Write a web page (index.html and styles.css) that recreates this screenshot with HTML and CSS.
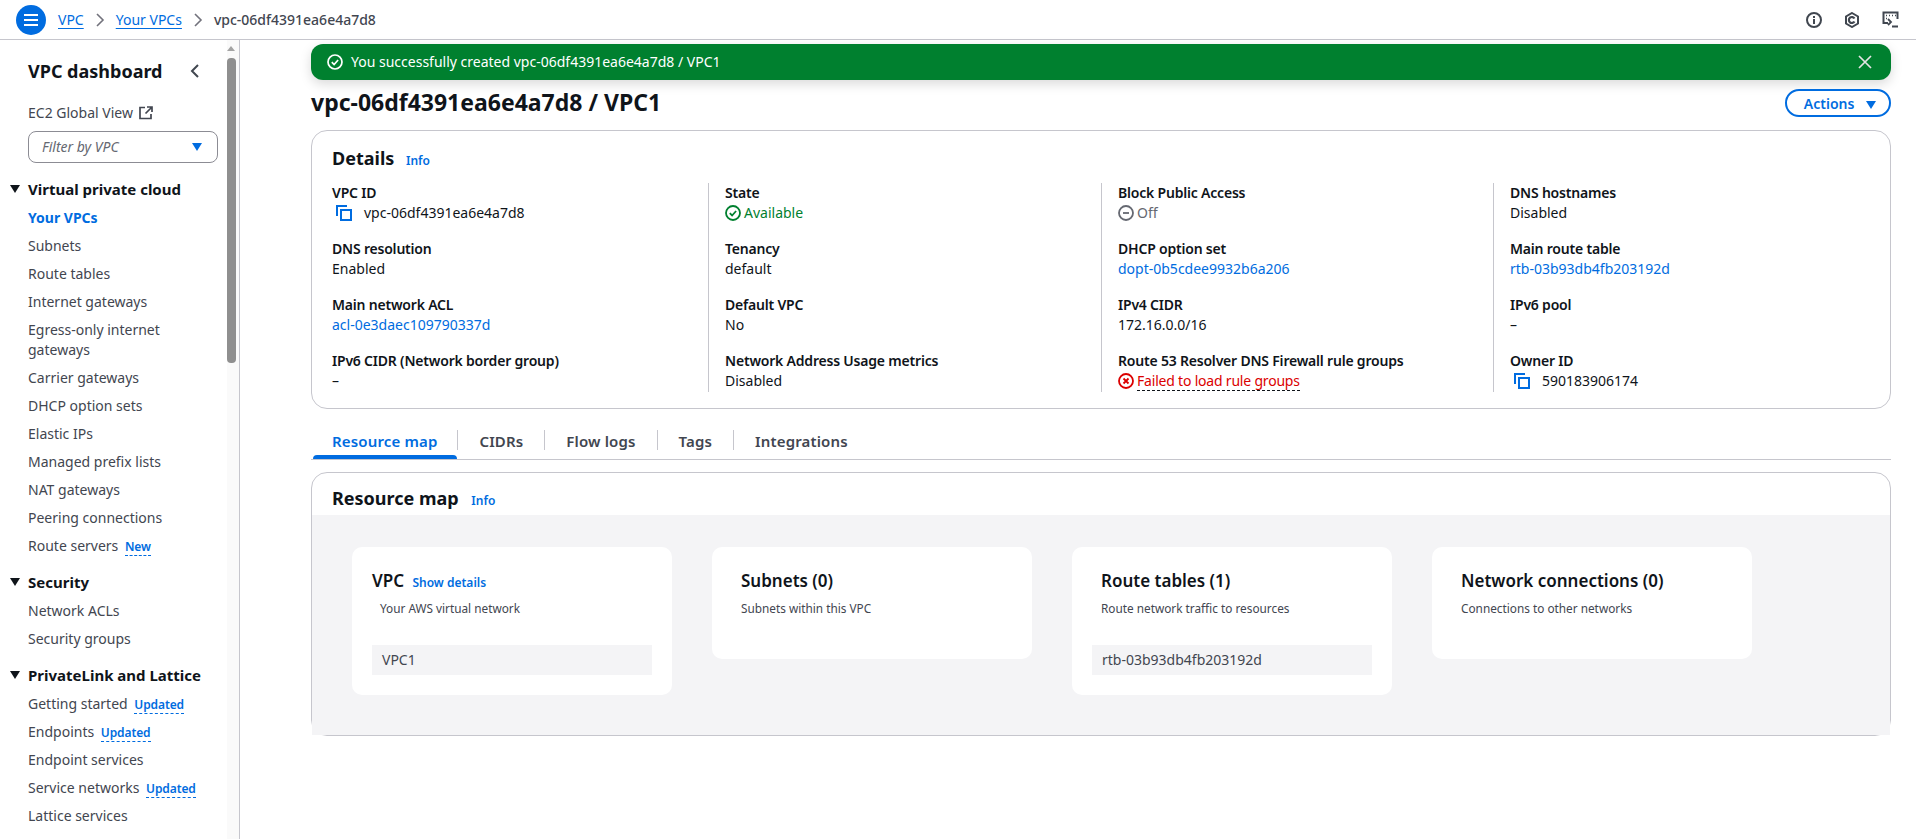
FILE: index.html
```html
<!DOCTYPE html>
<html lang="en">
<head>
    <meta charset="UTF-8">
    <meta name="viewport" content="width=device-width, initial-scale=1.0">
    <title>vpc-06df4391ea6e4a7d8 / VPC1</title>
    <link rel="stylesheet" href="styles.css">
</head>
<body>
    <header class="topbar">
        <button class="menu-btn" aria-label="Menu">
            <svg width="16" height="14" viewBox="0 0 16 14"><path d="M1 2h14M1 7h14M1 12h14" stroke="#fff" stroke-width="2" fill="none"/></svg>
        </button>
        <a class="crumb" href="#">VPC</a>
        <svg class="crumb-sep" width="10" height="14" viewBox="0 0 10 14"><path d="M2 1l6 6-6 6" stroke="#72727c" stroke-width="1.6" fill="none"/></svg>
        <a class="crumb" href="#">Your VPCs</a>
        <svg class="crumb-sep" width="10" height="14" viewBox="0 0 10 14"><path d="M2 1l6 6-6 6" stroke="#72727c" stroke-width="1.6" fill="none"/></svg>
        <span class="crumb-current">vpc-06df4391ea6e4a7d8</span>
        <div class="top-icons">
            <svg width="16" height="16" viewBox="0 0 16 16"><circle cx="8" cy="8" r="7" stroke="#414750" stroke-width="2" fill="none"/><path d="M8 7v5M8 4v2" stroke="#414750" stroke-width="2" fill="none"/></svg>
            <svg width="16" height="16" viewBox="0 0 16 16"><path d="M8 1l6 3.500v7L8 15l-6-3.500v-7z" stroke="#414750" stroke-width="2" fill="none"/><path d="M10.500 6.500A3 3 0 1 0 10.500 9.500" stroke="#414750" stroke-width="2.200" fill="none"/></svg>
            <svg width="17" height="17" viewBox="0 0 17 17"><path d="M6 12H1.500V1.500h14V8" stroke="#414750" stroke-width="2" fill="none"/><path d="M4 4.500h1M7 4.500h1M10 4.500h1M13 4.500h1M4 7.500h1" stroke="#414750" stroke-width="1.500" fill="none"/><path d="M6 8l3 3-3 3M10 15.500h6" stroke="#414750" stroke-width="1.800" fill="none"/></svg>
        </div>
    </header>

    <div class="layout">
        <nav class="sidebar">
            <div class="side-head">
                <h2>VPC dashboard</h2>
                <svg width="10" height="14" viewBox="0 0 10 14"><path d="M8 1L2 7l6 6" stroke="#414750" stroke-width="2" fill="none"/></svg>
            </div>
            <a class="side-link global" href="#">EC2 Global View
                <svg width="14" height="14" viewBox="0 0 14 14"><path d="M6 1.500H1v11h11V8M8 1h5v5M13 1L6.500 7.500" stroke="#424650" stroke-width="1.700" fill="none"/></svg>
            </a>
            <div class="side-filter">
                <span>Filter by VPC</span>
                <i class="tri-down blue"></i>
            </div>

            <div class="side-section first"><i class="tri-down"></i>Virtual private cloud</div>
            <a class="side-link active" href="#">Your VPCs</a>
            <a class="side-link" href="#">Subnets</a>
            <a class="side-link" href="#">Route tables</a>
            <a class="side-link" href="#">Internet gateways</a>
            <a class="side-link" href="#">Egress-only internet gateways</a>
            <a class="side-link" href="#">Carrier gateways</a>
            <a class="side-link" href="#">DHCP option sets</a>
            <a class="side-link" href="#">Elastic IPs</a>
            <a class="side-link" href="#">Managed prefix lists</a>
            <a class="side-link" href="#">NAT gateways</a>
            <a class="side-link" href="#">Peering connections</a>
            <a class="side-link" href="#">Route servers <b class="tag">New</b></a>

            <div class="side-section"><i class="tri-down"></i>Security</div>
            <a class="side-link" href="#">Network ACLs</a>
            <a class="side-link" href="#">Security groups</a>

            <div class="side-section"><i class="tri-down"></i>PrivateLink and Lattice</div>
            <a class="side-link" href="#">Getting started <b class="tag">Updated</b></a>
            <a class="side-link" href="#">Endpoints <b class="tag">Updated</b></a>
            <a class="side-link" href="#">Endpoint services</a>
            <a class="side-link" href="#">Service networks <b class="tag">Updated</b></a>
            <a class="side-link" href="#">Lattice services</a>
        </nav>
        <div class="side-scroll">
            <i class="scroll-up"></i>
            <div class="scroll-thumb"></div>
        </div>

        <main class="content">
            <div class="flash">
                <svg width="16" height="16" viewBox="0 0 16 16"><circle cx="8" cy="8" r="7" stroke="#fff" stroke-width="1.700" fill="none"/><path d="M4.800 8.200l2.300 2.300 4-4.500" stroke="#fff" stroke-width="1.700" fill="none"/></svg>
                <span>You successfully created vpc-06df4391ea6e4a7d8 / VPC1</span>
                <svg class="flash-close" width="14" height="14" viewBox="0 0 14 14"><path d="M1 1l12 12M13 1L1 13" stroke="#e4e4e4" stroke-width="1.700" fill="none"/></svg>
            </div>

            <div class="page-head">
                <h1>vpc-06df4391ea6e4a7d8 / VPC1</h1>
                <button class="actions">Actions <i class="tri-down blue big"></i></button>
            </div>

            <section class="card details">
                <h2>Details <a class="info" href="#">Info</a></h2>
                <div class="detail-grid">
                    <div class="detail-col">
                        <div class="kv"><label>VPC ID</label><p class="copy"><svg width="16" height="16" viewBox="0 0 16 16"><path d="M1 11V1h10" stroke="#006ce0" stroke-width="2" fill="none"/><rect x="5" y="5" width="10" height="10" stroke="#006ce0" stroke-width="2" fill="none"/></svg>vpc-06df4391ea6e4a7d8</p></div>
                        <div class="kv"><label>DNS resolution</label><p>Enabled</p></div>
                        <div class="kv"><label>Main network ACL</label><p><a href="#">acl-0e3daec109790337d</a></p></div>
                        <div class="kv"><label>IPv6 CIDR (Network border group)</label><p>–</p></div>
                    </div>
                    <div class="detail-col">
                        <div class="kv"><label>State</label><p class="status ok"><svg width="16" height="16" viewBox="0 0 16 16"><circle cx="8" cy="8" r="7" stroke="#00802f" stroke-width="1.800" fill="none"/><path d="M4.800 8.200l2.300 2.300 4-4.500" stroke="#00802f" stroke-width="1.800" fill="none"/></svg>Available</p></div>
                        <div class="kv"><label>Tenancy</label><p>default</p></div>
                        <div class="kv"><label>Default VPC</label><p>No</p></div>
                        <div class="kv"><label>Network Address Usage metrics</label><p>Disabled</p></div>
                    </div>
                    <div class="detail-col">
                        <div class="kv"><label>Block Public Access</label><p class="status off"><svg width="16" height="16" viewBox="0 0 16 16"><circle cx="8" cy="8" r="7" stroke="#656871" stroke-width="1.800" fill="none"/><path d="M5 8h6" stroke="#656871" stroke-width="1.800" fill="none"/></svg>Off</p></div>
                        <div class="kv"><label>DHCP option set</label><p><a href="#">dopt-0b5cdee9932b6a206</a></p></div>
                        <div class="kv"><label>IPv4 CIDR</label><p>172.16.0.0/16</p></div>
                        <div class="kv"><label>Route 53 Resolver DNS Firewall rule groups</label><p class="status err"><svg width="16" height="16" viewBox="0 0 16 16"><circle cx="8" cy="8" r="7" stroke="#db0000" stroke-width="1.800" fill="none"/><path d="M5.500 5.500l5 5M10.500 5.500l-5 5" stroke="#db0000" stroke-width="1.800" fill="none"/></svg><span>Failed to load rule groups</span></p></div>
                    </div>
                    <div class="detail-col">
                        <div class="kv"><label>DNS hostnames</label><p>Disabled</p></div>
                        <div class="kv"><label>Main route table</label><p><a href="#">rtb-03b93db4fb203192d</a></p></div>
                        <div class="kv"><label>IPv6 pool</label><p>–</p></div>
                        <div class="kv"><label>Owner ID</label><p class="copy"><svg width="16" height="16" viewBox="0 0 16 16"><path d="M1 11V1h10" stroke="#006ce0" stroke-width="2" fill="none"/><rect x="5" y="5" width="10" height="10" stroke="#006ce0" stroke-width="2" fill="none"/></svg>590183906174</p></div>
                    </div>
                </div>
            </section>

            <div class="tabs">
                <a class="tab active" href="#">Resource map</a>
                <a class="tab" href="#">CIDRs</a>
                <a class="tab" href="#">Flow logs</a>
                <a class="tab" href="#">Tags</a>
                <a class="tab" href="#">Integrations</a>
            </div>

            <section class="card resmap">
                <h2>Resource map <a class="info" href="#">Info</a></h2>
                <div class="map-body">
                    <div class="map-card">
                        <h3>VPC <a href="#">Show details</a></h3>
                        <p class="map-desc inset">Your AWS virtual network</p>
                        <div class="map-value">VPC1</div>
                    </div>
                    <div class="map-card short">
                        <h3 class="indent">Subnets (0)</h3>
                        <p class="map-desc indent">Subnets within this VPC</p>
                    </div>
                    <div class="map-card">
                        <h3 class="indent">Route tables (1)</h3>
                        <p class="map-desc indent">Route network traffic to resources</p>
                        <div class="map-value">rtb-03b93db4fb203192d</div>
                    </div>
                    <div class="map-card short">
                        <h3 class="indent">Network connections (0)</h3>
                        <p class="map-desc indent">Connections to other networks</p>
                    </div>
                </div>
            </section>
        </main>
    </div>
</body>
</html>
```

FILE: styles.css
```css
* {
    box-sizing: border-box;
}

body {
    margin: 0;
    height: 839px;
    overflow: hidden;
    background-color: #fff;
    color: #0f141a;
    font-family: "Noto Sans", Arial, sans-serif;
    font-size: 14px;
    line-height: 20px;
}

a {
    color: #006ce0;
    text-decoration: none;
}

p, h1, h2, h3 {
    margin: 0;
}

/* top bar */
.topbar {
    display: flex;
    align-items: center;
    height: 40px;
    padding: 0 16px;
    border-bottom: 1px solid #c6c6cd;
}

.menu-btn {
    display: flex;
    align-items: center;
    justify-content: center;
    width: 30px;
    height: 30px;
    padding: 0;
    margin-right: 12px;
    border: none;
    border-radius: 50%;
    background-color: #006ce0;
}

.crumb {
    text-decoration: underline;
    text-underline-offset: 3px;
}

.crumb-sep {
    margin: 0 11px 0 11px;
}

.crumb-current {
    color: #424650;
    font-weight: 500;
}

.top-icons {
    display: flex;
    align-items: center;
    gap: 22px;
    margin-left: auto;
    padding-right: 1px;
}

/* sidebar */
.layout {
    display: flex;
    height: 799px;
}

.sidebar {
    width: 227px;
    padding: 20px 0 0 28px;
    overflow: hidden;
    flex-shrink: 0;
}

.side-head {
    display: flex;
    align-items: center;
    justify-content: space-between;
    width: 172px;
    height: 22px;
}

.side-head h2 {
    font-size: 18px;
    font-weight: 700;
    line-height: 22px;
}

.side-link {
    display: block;
    margin-bottom: 8px;
    color: #424650;
    width: 172px;
}

.side-link.global {
    display: flex;
    align-items: center;
    gap: 6px;
    margin-top: 21px;
    margin-bottom: 8px;
    width: auto;
}

.side-link.active {
    color: #006ce0;
    font-weight: 700;
}

.side-filter {
    display: flex;
    align-items: center;
    justify-content: space-between;
    width: 190px;
    height: 32px;
    padding: 0 15px 0 13px;
    border: 1px solid #8c8c94;
    border-radius: 8px;
    color: #656871;
    font-style: italic;
}

.side-section {
    position: relative;
    margin: 16px 0 9px;
    font-weight: 700;
    font-size: 15px;
}

.side-section .tri-down {
    position: absolute;
    left: -18px;
    top: 6px;
    border-top-color: #0f141a;
}

.tri-down {
    display: inline-block;
    width: 0;
    height: 0;
    border-left: 5px solid transparent;
    border-right: 5px solid transparent;
    border-top: 8px solid #0f141a;
}

.tri-down.blue {
    border-top-color: #006ce0;
}

.tri-down.big {
    margin-left: 8px;
}

.tag {
    margin-left: 3px;
    color: #006ce0;
    font-size: 12px;
    font-weight: 600;
    letter-spacing: -0.1px;
    line-height: 1;
    border-bottom: 1px dashed #006ce0;
}

.side-scroll {
    position: relative;
    width: 13px;
    flex-shrink: 0;
    border-right: 1px solid #c6c6cd;
    background-color: #fafafa;
}

.scroll-up {
    position: absolute;
    left: 0;
    top: 6px;
    border-left: 4px solid transparent;
    border-right: 4px solid transparent;
    border-bottom: 5px solid #a3a3a3;
}

.scroll-thumb {
    width: 9px;
    margin-top: 18px;
    height: 305px;
    border-radius: 4px;
    background-color: #8f8f8f;
}

/* main */
.content {
    flex: 1;
    padding: 4px 25px 0 71px;
}

.flash {
    display: flex;
    align-items: center;
    gap: 8px;
    height: 36px;
    padding: 0 16px;
    border-radius: 12px;
    background-color: #00802f;
    color: #fff;
    box-shadow: 0 4px 12px rgba(0, 0, 0, 0.15);
}

.flash-close {
    margin-left: auto;
    margin-right: 3px;
}

.page-head {
    display: flex;
    align-items: center;
    justify-content: space-between;
    height: 40px;
    margin: 3px 0 7px;
}

.page-head h1 {
    margin-bottom: 2px;
    font-size: 23px;
    font-weight: 700;
    line-height: 30px;
}

.actions {
    height: 28px;
    padding: 0 13px 0 17px;
    border: 2px solid #006ce0;
    border-radius: 20px;
    background-color: #fff;
    color: #006ce0;
    font-family: inherit;
    font-size: 14px;
    font-weight: 600;
}

.card {
    border: 1px solid #c6c6cd;
    border-radius: 16px;
}

.card h2 {
    height: 22px;
    font-size: 18px;
    font-weight: 700;
    line-height: 22px;
}

.info {
    margin-left: 7px;
    font-size: 12px;
    font-weight: 600;
}

.details {
    height: 279px;
    padding: 16px 20px 0;
}

.detail-grid {
    display: grid;
    grid-template-columns: 376px 393px 392px 1fr;
    margin-top: 14px;
}

.detail-col {
    display: flex;
    flex-direction: column;
    gap: 16px;
    height: 209px;
    padding-left: 16px;
    border-left: 1px solid #c6c6cd;
}

.detail-col:first-child {
    padding-left: 0;
    border-left: none;
}

.kv label {
    display: block;
    font-weight: 600;
    letter-spacing: -0.2px;
}

.copy {
    display: flex;
    align-items: center;
    gap: 12px;
    padding-left: 4px;
}

.status {
    display: flex;
    align-items: center;
    gap: 3px;
}

.status.ok {
    color: #00802f;
}

.status.off {
    color: #656871;
}

.status.err {
    color: #db0000;
    letter-spacing: -0.2px;
}

.status.err span {
    border-bottom: 1px dashed #0f141a;
    line-height: 19px;
}

.tabs {
    display: flex;
    height: 35px;
    margin-top: 16px;
    padding-left: 1px;
    border-bottom: 1px solid #c6c6cd;
}

.tab {
    position: relative;
    padding: 0 21px 0 22px;
    color: #424650;
    font-size: 15px;
    font-weight: 600;
    letter-spacing: 0.15px;
    line-height: 32px;
}

.tab + .tab::before {
    content: "";
    position: absolute;
    left: 0;
    top: 5px;
    height: 20px;
    border-left: 1px solid #c6c6cd;
}

.tab.active {
    padding-left: 20px;
    padding-right: 20px;
    color: #006ce0;
}

.tab.active::after {
    content: "";
    position: absolute;
    left: 1px;
    right: 0;
    bottom: 0;
    height: 4px;
    border-radius: 4px 4px 0 0;
    background-color: #006ce0;
}

.resmap {
    height: 264px;
    margin-top: 12px;
}

.resmap h2 {
    height: 42px;
    padding: 14px 20px 0;
}

.resmap .info {
    margin-left: 8px;
}

.map-body {
    display: flex;
    align-items: flex-start;
    gap: 40px;
    height: 220px;
    padding: 32px 40px;
    background-color: #f4f4f6;
}

.map-card {
    width: 320px;
    height: 148px;
    padding: 23px 20px 0;
    border-radius: 10px;
    background-color: #fff;
}

.map-card.short {
    height: 112px;
}

.map-card h3 {
    height: 22px;
    font-size: 17px;
    font-weight: 600;
    line-height: 22px;
}

.map-card h3 a {
    margin-left: 4px;
    font-size: 12px;
}

.map-desc {
    margin-top: 8px;
    color: #424650;
    font-size: 11.800px;
    line-height: 16px;
}

.map-desc.inset {
    padding-left: 8px;
}

.indent {
    padding-left: 9px;
}

.map-value {
    height: 30px;
    margin-top: 29px;
    padding-left: 10px;
    background-color: #f4f4f6;
    color: #424650;
    line-height: 30px;
}
```
